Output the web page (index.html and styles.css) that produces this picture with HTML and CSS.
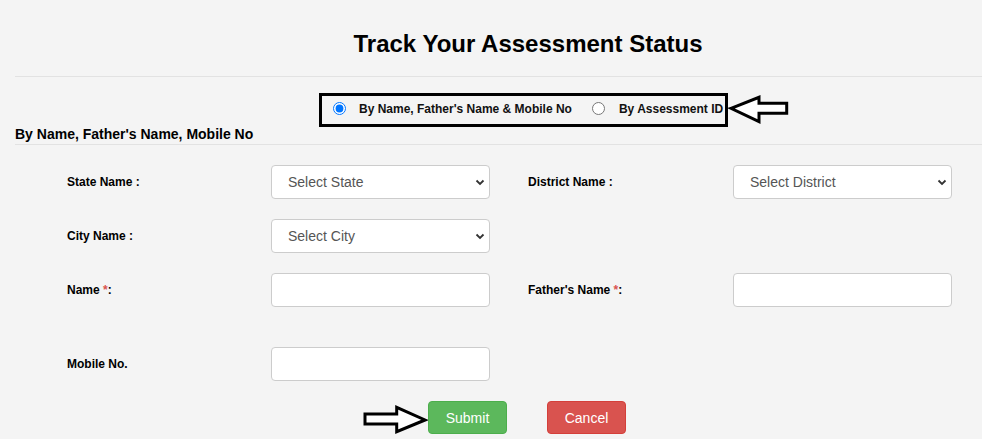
FILE: index.html
```html
<!DOCTYPE html>
<html lang="en">
<head>
<meta charset="utf-8">
<title>Track Your Assessment Status</title>
<link rel="stylesheet" href="styles.css">
</head>
<body>
<div class="page">
  <h2 class="title">Track Your Assessment Status</h2>
  <div class="rule"></div>

  <div class="mode-box">
    <input type="radio" name="mode" id="m1" class="radio r1" checked>
    <label for="m1" class="mode-label">By Name, Father's Name &amp; Mobile No</label>
    <input type="radio" name="mode" id="m2" class="radio r2">
    <label for="m2" class="mode-label">By Assessment ID</label>
  </div>

  <h4 class="section">By Name, Father's Name, Mobile No</h4>
  <div class="rule rule-tight"></div>

  <div class="form">
    <div class="row">
      <label class="lbl">State Name :</label>
      <div class="sel-wrap">
        <select class="ctl sel"><option>Select State</option></select>
        <svg class="chev" width="10" height="7" viewBox="0 0 10 7"><path d="M1.5 1.5 L5 5 L8.5 1.5" fill="none" stroke="#333" stroke-width="1.8"/></svg>
      </div>
      <label class="lbl">District Name :</label>
      <div class="sel-wrap">
        <select class="ctl sel"><option>Select District</option></select>
        <svg class="chev" width="10" height="7" viewBox="0 0 10 7"><path d="M1.5 1.5 L5 5 L8.5 1.5" fill="none" stroke="#333" stroke-width="1.8"/></svg>
      </div>
    </div>
    <div class="row">
      <label class="lbl">City Name :</label>
      <div class="sel-wrap">
        <select class="ctl sel"><option>Select City</option></select>
        <svg class="chev" width="10" height="7" viewBox="0 0 10 7"><path d="M1.5 1.5 L5 5 L8.5 1.5" fill="none" stroke="#333" stroke-width="1.8"/></svg>
      </div>
    </div>
    <div class="row row-tall">
      <label class="lbl">Name <span class="req">*</span>:</label>
      <input type="text" class="ctl">
      <label class="lbl">Father's Name <span class="req">*</span>:</label>
      <input type="text" class="ctl">
    </div>
    <div class="row">
      <label class="lbl">Mobile No.</label>
      <input type="text" class="ctl">
    </div>
  </div>

  <div class="actions">
    <button class="btn btn-submit">Submit</button>
    <button class="btn btn-cancel">Cancel</button>
  </div>
</div>

<svg class="arrow arrow-left" width="62" height="31" viewBox="0 0 62 31">
  <polygon points="3,14.3 31,3.3 31,9.3 58.7,9.3 58.7,19.3 31,19.3 31,27.7" fill="#fff" stroke="#000" stroke-width="3" stroke-linejoin="miter"/>
</svg>
<svg class="arrow arrow-right" width="66" height="31" viewBox="0 0 66 31">
  <polygon points="3,10 34.7,10 34.7,3.3 63,16 34.7,27.7 34.7,20 3,20" fill="#fff" stroke="#000" stroke-width="3" stroke-linejoin="miter"/>
</svg>
</body>
</html>
```

FILE: styles.css
```css
html, body {
  margin: 0;
  padding: 0;
}
body {
  background: #f4f4f4;
  font-family: "Liberation Sans", Arial, sans-serif;
  color: #111;
  overflow: hidden;
  position: relative;
  width: 982px;
  height: 439px;
}
.page {
  margin-left: 15px;
}
.title {
  margin: 30px 0 0;
  padding-left: 59px;
  font-size: 24px;
  line-height: 28px;
  font-weight: bold;
  text-align: center;
  color: #000;
}
.rule {
  height: 1px;
  background: #e2e2e2;
  margin-top: 18px;
}
.rule-tight {
  margin-top: 2px;
}
.mode-box {
  margin: 16px 0 0 304px;
  width: 403px;
  height: 25px;
  padding-bottom: 3px;
  border: 3px solid #000;
  display: flex;
  align-items: center;
}
.radio {
  margin: 0;
  width: 13px;
  height: 13px;
  flex: none;
}
.r1 {
  margin-left: 11px;
  margin-right: 13px;
}
.r2 {
  margin-left: 20px;
  margin-right: 14px;
}
.mode-label {
  font-size: 12px;
  font-weight: bold;
  line-height: 14px;
  padding-top: 1px;
  white-space: nowrap;
}
.section {
  margin: -1px 0 0;
  font-size: 14px;
  line-height: 16px;
  font-weight: bold;
  color: #000;
}
.form {
  margin-top: 20px;
  padding-left: 52px;
}
.row {
  display: grid;
  grid-template-columns: 204px 257px 205px 219px;
  align-items: center;
  margin-bottom: 20px;
}
.row-tall {
  margin-bottom: 40px;
}
.lbl {
  font-size: 12px;
  font-weight: bold;
  line-height: 14px;
  color: #000;
}
.req {
  color: #d9534f;
}
.ctl {
  box-sizing: border-box;
  width: 219px;
  height: 34px;
  margin: 0;
  border: 1px solid #ccc;
  border-radius: 4px;
  background: #fff;
  font-family: "Liberation Sans", Arial, sans-serif;
  font-size: 14px;
  color: #555;
  padding: 0 12px;
}
.sel-wrap {
  position: relative;
  width: 219px;
  height: 34px;
}
.sel {
  appearance: none;
  -webkit-appearance: none;
  padding-left: 16px;
  width: 219px;
}
.chev {
  position: absolute;
  right: 5px;
  top: 14px;
  pointer-events: none;
}
.actions {
  display: flex;
  justify-content: center;
  gap: 40px;
  padding-left: 57px;
}
.btn {
  box-sizing: border-box;
  width: 79px;
  height: 33px;
  border-radius: 4px;
  font-family: "Liberation Sans", Arial, sans-serif;
  font-size: 14px;
  color: #fff;
  padding: 0;
  cursor: pointer;
}
.btn-submit {
  background: #5cb85c;
  border: 1px solid #4cae4c;
}
.btn-cancel {
  background: #d9534f;
  border: 1px solid #d43f3a;
}
.arrow {
  position: absolute;
}
.arrow-left {
  left: 728px;
  top: 94px;
}
.arrow-right {
  left: 362px;
  top: 404px;
}
```
